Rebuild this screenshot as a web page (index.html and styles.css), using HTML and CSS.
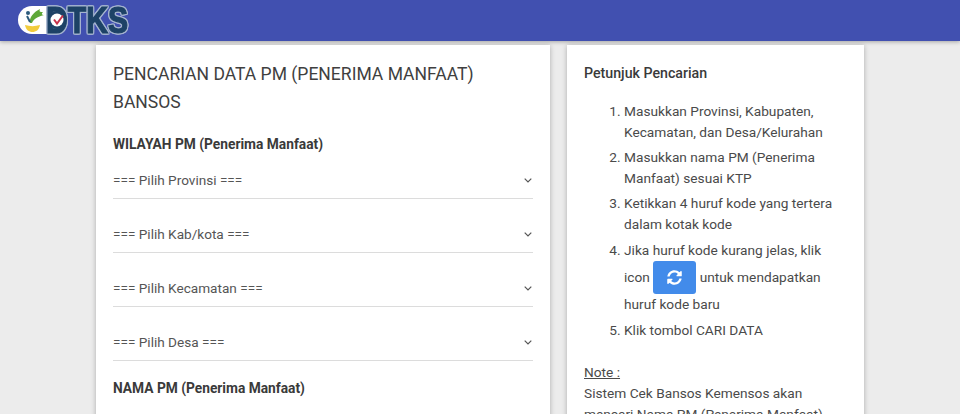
FILE: index.html
```html
<!DOCTYPE html>
<html lang="id">
<head>
<meta charset="utf-8">
<title>DTKS</title>
<link rel="stylesheet" href="styles.css">
</head>
<body>
<header class="topbar">
  <div class="logo">
    <svg width="120" height="34" viewBox="0 0 120 34">
      <rect x="1" y="2" width="44" height="28" rx="14" fill="#fff"/>
      <path d="M8 21c5 1.500 10 1.500 15 0-1 5-4 7-7.500 7S9 26 8 21z" fill="#f2cc3c"/>
      <path d="M13 19c-1-6 4-11 10-14-1 3 0 3 3 3-2 2-1 3 1 3-4 1-10 3-12 8z" fill="#5fa838"/>
      <circle cx="11" cy="9" r="2" fill="#2c5a7c"/>
      <path d="M10 12l3 6" stroke="#2c5a7c" stroke-width="2"/>
      <text class="logo-text" x="29" y="29" font-size="36" textLength="82" lengthAdjust="spacingAndGlyphs">DTKS</text>
      <circle cx="40" cy="16" r="9" fill="#1d4266"/>
      <circle cx="40" cy="16" r="6.500" fill="#fff"/>
      <path d="M37 15.500l3 4 6-8" fill="none" stroke="#c8324a" stroke-width="2"/>
    </svg>
  </div>
</header>
<main class="page">
  <section class="card form-card">
    <h1 class="title">PENCARIAN DATA PM (PENERIMA MANFAAT) BANSOS</h1>
    <h2 class="label">WILAYAH PM (Penerima Manfaat)</h2>
    <div class="select"><span>=== Pilih Provinsi ===</span><svg class="chev" width="8" height="5" viewBox="0 0 8 5"><path d="M.7.7 4 4l3.300-3.300" fill="none" stroke="#555" stroke-width="1.200"/></svg></div>
    <div class="select"><span>=== Pilih Kab/kota ===</span><svg class="chev" width="8" height="5" viewBox="0 0 8 5"><path d="M.7.7 4 4l3.300-3.300" fill="none" stroke="#555" stroke-width="1.200"/></svg></div>
    <div class="select"><span>=== Pilih Kecamatan ===</span><svg class="chev" width="8" height="5" viewBox="0 0 8 5"><path d="M.7.7 4 4l3.300-3.300" fill="none" stroke="#555" stroke-width="1.200"/></svg></div>
    <div class="select"><span>=== Pilih Desa ===</span><svg class="chev" width="8" height="5" viewBox="0 0 8 5"><path d="M.7.7 4 4l3.300-3.300" fill="none" stroke="#555" stroke-width="1.200"/></svg></div>
    <h2 class="label name-label">NAMA PM (Penerima Manfaat)</h2>
  </section>
  <aside class="card help-card">
    <h3 class="help-title">Petunjuk Pencarian</h3>
    <ol class="steps">
      <li>Masukkan Provinsi, Kabupaten, Kecamatan, dan Desa/Kelurahan</li>
      <li>Masukkan nama PM (Penerima Manfaat) sesuai KTP</li>
      <li>Ketikkan 4 huruf kode yang tertera dalam kotak kode</li>
      <li class="tall">Jika huruf kode kurang jelas, klik icon <span class="refresh"><svg width="15" height="15" viewBox="0 0 512 512"><path fill="#fff" d="M370.72 133.28C339.458 104.008 298.888 87.962 255.848 88c-77.458.068-144.328 53.178-162.791 126.85-1.344 5.363-6.122 9.15-11.651 9.15H24.103c-7.498 0-13.194-6.807-11.807-14.176C33.933 94.924 134.813 8 256 8c66.448 0 126.791 26.136 171.315 68.685L463.03 40.97C478.149 25.851 504 36.559 504 57.941V192c0 13.255-10.745 24-24 24H345.941c-21.382 0-32.09-25.851-16.971-40.971l41.75-41.749zM32 296h134.059c21.382 0 32.09 25.851 16.971 40.971l-41.75 41.75c31.262 29.273 71.835 45.319 114.876 45.28 77.418-.07 144.315-53.144 162.787-126.849 1.344-5.363 6.122-9.15 11.651-9.15h57.304c7.498 0 13.194 6.807 11.807 14.176C478.067 417.076 377.187 504 256 504c-66.448 0-126.791-26.136-171.315-68.685L48.97 471.03C33.851 486.149 8 475.441 8 454.059V320c0-13.255 10.745-24 24-24z"/></svg></span> untuk mendapatkan huruf kode baru</li>
      <li class="last">Klik tombol CARI DATA</li>
    </ol>
    <p class="note"><u>Note :</u><br>Sistem Cek Bansos Kemensos akan mencari Nama PM (Penerima Manfaat)</p>
  </aside>
</main>
</body>
</html>
```
FILE: styles.css
```css
* { box-sizing: border-box; }
html, body { height: 414px; overflow: hidden; }
body {
  margin: 0;
  background: #ececec;
  font-family: Roboto, "Liberation Sans", sans-serif;
  color: #3f3f3f;
}
.topbar {
  height: 41px;
  background: #4150b0;
  box-shadow: 0 1px 4px rgba(0,0,0,.3);
  padding: 4px 0 0 17px;
}
.logo { width: 120px; height: 34px; }
.logo-text {
  font-family: "Liberation Sans", sans-serif;
  font-weight: 700;
  fill: #1d4266;
  stroke: #1d4266;
  stroke-width: 1.2px;
  filter: drop-shadow(1px 0 0 #a5b4cf) drop-shadow(-1px 0 0 #a5b4cf) drop-shadow(0 1px 0 #a5b4cf) drop-shadow(0 -1px 0 #a5b4cf);
}
.page {
  display: flex;
  align-items: flex-start;
  gap: 17px;
  padding: 4px 0 0 96px;
}
.card {
  background: #fff;
  box-shadow: 0 1px 5px rgba(0,0,0,.28);
  height: 420px;
}
.form-card { width: 454px; padding: 15px 17px; }
.help-card { width: 297px; padding: 20px 17px; }
.title {
  margin: 0;
  font-size: 17.55px;
  font-weight: 400;
  line-height: 28px;
  color: #3f3f3f;
}
.label {
  margin: 18px 0 0;
  font-size: 13.75px;
  font-weight: 700;
  line-height: 21px;
  color: #3a3a3a;
}
.select {
  display: flex;
  justify-content: space-between;
  align-items: center;
  height: 44px;
  margin-bottom: 10px;
  padding: 7px 0 0;
  font-size: 13.6px;
  color: #555;
  border-bottom: 1px solid #dcdcdc;
}
.chev { margin-right: 1px; }
.name-label { margin-top: 17px; }
.help-title {
  margin: 0;
  font-size: 14.2px;
  font-weight: 500;
  line-height: 17px;
  color: #3a3a3a;
}
.steps {
  margin: 19px 0 0;
  padding: 0 0 0 40px;
  font-size: 13.7px;
  line-height: 21px;
  color: #4a4a4a;
}
.steps li { margin-bottom: 4px; }
.steps .tall { line-height: 27px; margin-top: -2.5px; margin-bottom: 2px; }
.refresh {
  display: inline-flex;
  justify-content: center;
  align-items: center;
  width: 43px;
  height: 33px;
  margin: -4px 0;
  background: #428bea;
  border-radius: 3px;
  vertical-align: middle;
}
.note {
  margin: 21px 0 0;
  font-size: 13.7px;
  line-height: 21px;
  color: #4a4a4a;
}
```
